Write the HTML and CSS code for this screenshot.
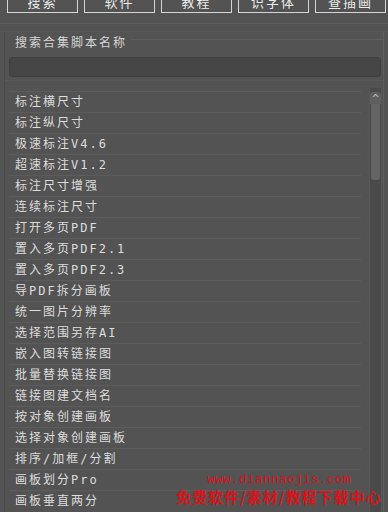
FILE: index.html
```html
<!DOCTYPE html>
<html lang="zh-CN">
<head>
    <meta charset="UTF-8">
    <meta name="viewport" content="width=device-width, initial-scale=1.0">
    <title>脚本合集</title>
    <link rel="stylesheet" href="styles.css">
</head>
<body>

    <div class="toolbar">
        <button class="tool-btn">搜索</button>
        <button class="tool-btn">软件</button>
        <button class="tool-btn">教程</button>
        <button class="tool-btn">识字体</button>
        <button class="tool-btn">查插画</button>
    </div>

    <div class="bar-lines"></div>

    <div class="group">
        <div class="group-head">
            <span class="group-title">搜索合集脚本名称</span>
            <span class="group-line"></span>
        </div>

        <input type="text" class="search-input">

        <div class="list">
            <ul class="items">
                <li>标注横尺寸</li>
                <li>标注纵尺寸</li>
                <li>极速标注V4.6</li>
                <li>超速标注V1.2</li>
                <li>标注尺寸增强</li>
                <li>连续标注尺寸</li>
                <li>打开多页PDF</li>
                <li>置入多页PDF2.1</li>
                <li>置入多页PDF2.3</li>
                <li>导PDF拆分画板</li>
                <li>统一图片分辨率</li>
                <li>选择范围另存AI</li>
                <li>嵌入图转链接图</li>
                <li>批量替换链接图</li>
                <li>链接图建文档名</li>
                <li>按对象创建画板</li>
                <li>选择对象创建画板</li>
                <li>排序/加框/分割</li>
                <li>画板划分Pro</li>
                <li>画板垂直两分</li>
            </ul>
            <div class="scrollbar">
                <div class="scroll-up">^</div>
                <div class="scroll-thumb"></div>
            </div>
        </div>
    </div>

    <div class="watermark">
        <div class="wm-url">www.diannaojis.com</div>
        <div class="wm-text">免费软件/素材/教程下载中心</div>
    </div>

</body>
</html>
```

FILE: styles.css
```css
body {
    margin: 0;
    background-color: #535353;
    color: #dcdcdc;
    font-family: "DejaVu Sans Mono", "Noto Sans CJK SC", monospace;
    font-size: 12px;
    height: 512px;
    overflow: hidden;
    position: relative;
}

.toolbar {
    display: flex;
    gap: 6px;
    padding-left: 7px;
    margin-top: -10px;
}

.tool-btn {
    width: 71px;
    height: 23px;
    padding: 0;
    background: none;
    border: 1px solid #d6d6d6;
    color: #ececec;
    font-family: "Noto Sans CJK SC", sans-serif;
    font-size: 13px;
    line-height: 20px;
    letter-spacing: 2px;
}

.bar-lines {
    margin-top: 10px;
    height: 7px;
    border-top: 1px solid #5d5d5d;
    border-bottom: 1px solid #5a5a5a;
}

.group {
    margin-left: 4px;
    width: 378px;
    border-left: 1px solid #4a4a4a;
    border-right: 1px solid #5e5e5e;
}

.group-head {
    display: flex;
    height: 19px;
    padding-top: 1px;
}

.group-title {
    padding-left: 10px;
    line-height: 18px;
    letter-spacing: 2px;
    color: #d6d6d6;
    font-family: "Noto Sans CJK SC", sans-serif;
}

.group-line {
    flex: 1;
    margin-top: 6px;
    margin-left: 4px;
    height: 0;
    border-top: 1px solid #5d5d5d;
}

.search-input {
    display: block;
    margin: 5px 0 0 4px;
    width: 372px;
    height: 20px;
    box-sizing: border-box;
    background-color: #464646;
    border: 1px solid #404040;
    border-radius: 3px;
}

.list {
    margin-top: 3px;
    border-top: 1px solid #595959;
    display: flex;
}

.items {
    list-style: none;
    margin: 0;
    padding: 10px 0 0 4px;
    width: 352px;
}

.items li {
    height: 20px;
    line-height: 20px;
    border-top: 1px solid #5c5c5c;
    padding-left: 6px;
    letter-spacing: 2px;
    white-space: nowrap;
}

.scrollbar {
    margin: 7px 0 0 8px;
    width: 11px;
    height: 430px;
    background-color: #4a4a4a;
    border-left: 1px solid #585858;
    border-right: 1px solid #585858;
}

.scroll-up {
    height: 12px;
    margin-top: 4px;
    text-align: center;
    font-size: 11px;
    line-height: 14px;
    color: #bdbdbd;
    background-color: #5f5f5f;
    border-radius: 3px 3px 0 0;
}

.scroll-thumb {
    margin: 0 1px;
    height: 76px;
    background-color: #646464;
    border-radius: 0 0 3px 3px;
}

.watermark {
    position: absolute;
    left: 176px;
    top: 472px;
    color: #d8141a;
    white-space: nowrap;
}

.wm-url {
    padding-left: 31px;
    font-family: "Liberation Mono", monospace;
    font-size: 13px;
    line-height: 15px;
    letter-spacing: 0.2px;
}

.wm-text {
    font-family: "Noto Sans CJK SC", sans-serif;
    font-size: 15px;
    font-weight: bold;
    line-height: 20px;
    letter-spacing: 1px;
}
```
